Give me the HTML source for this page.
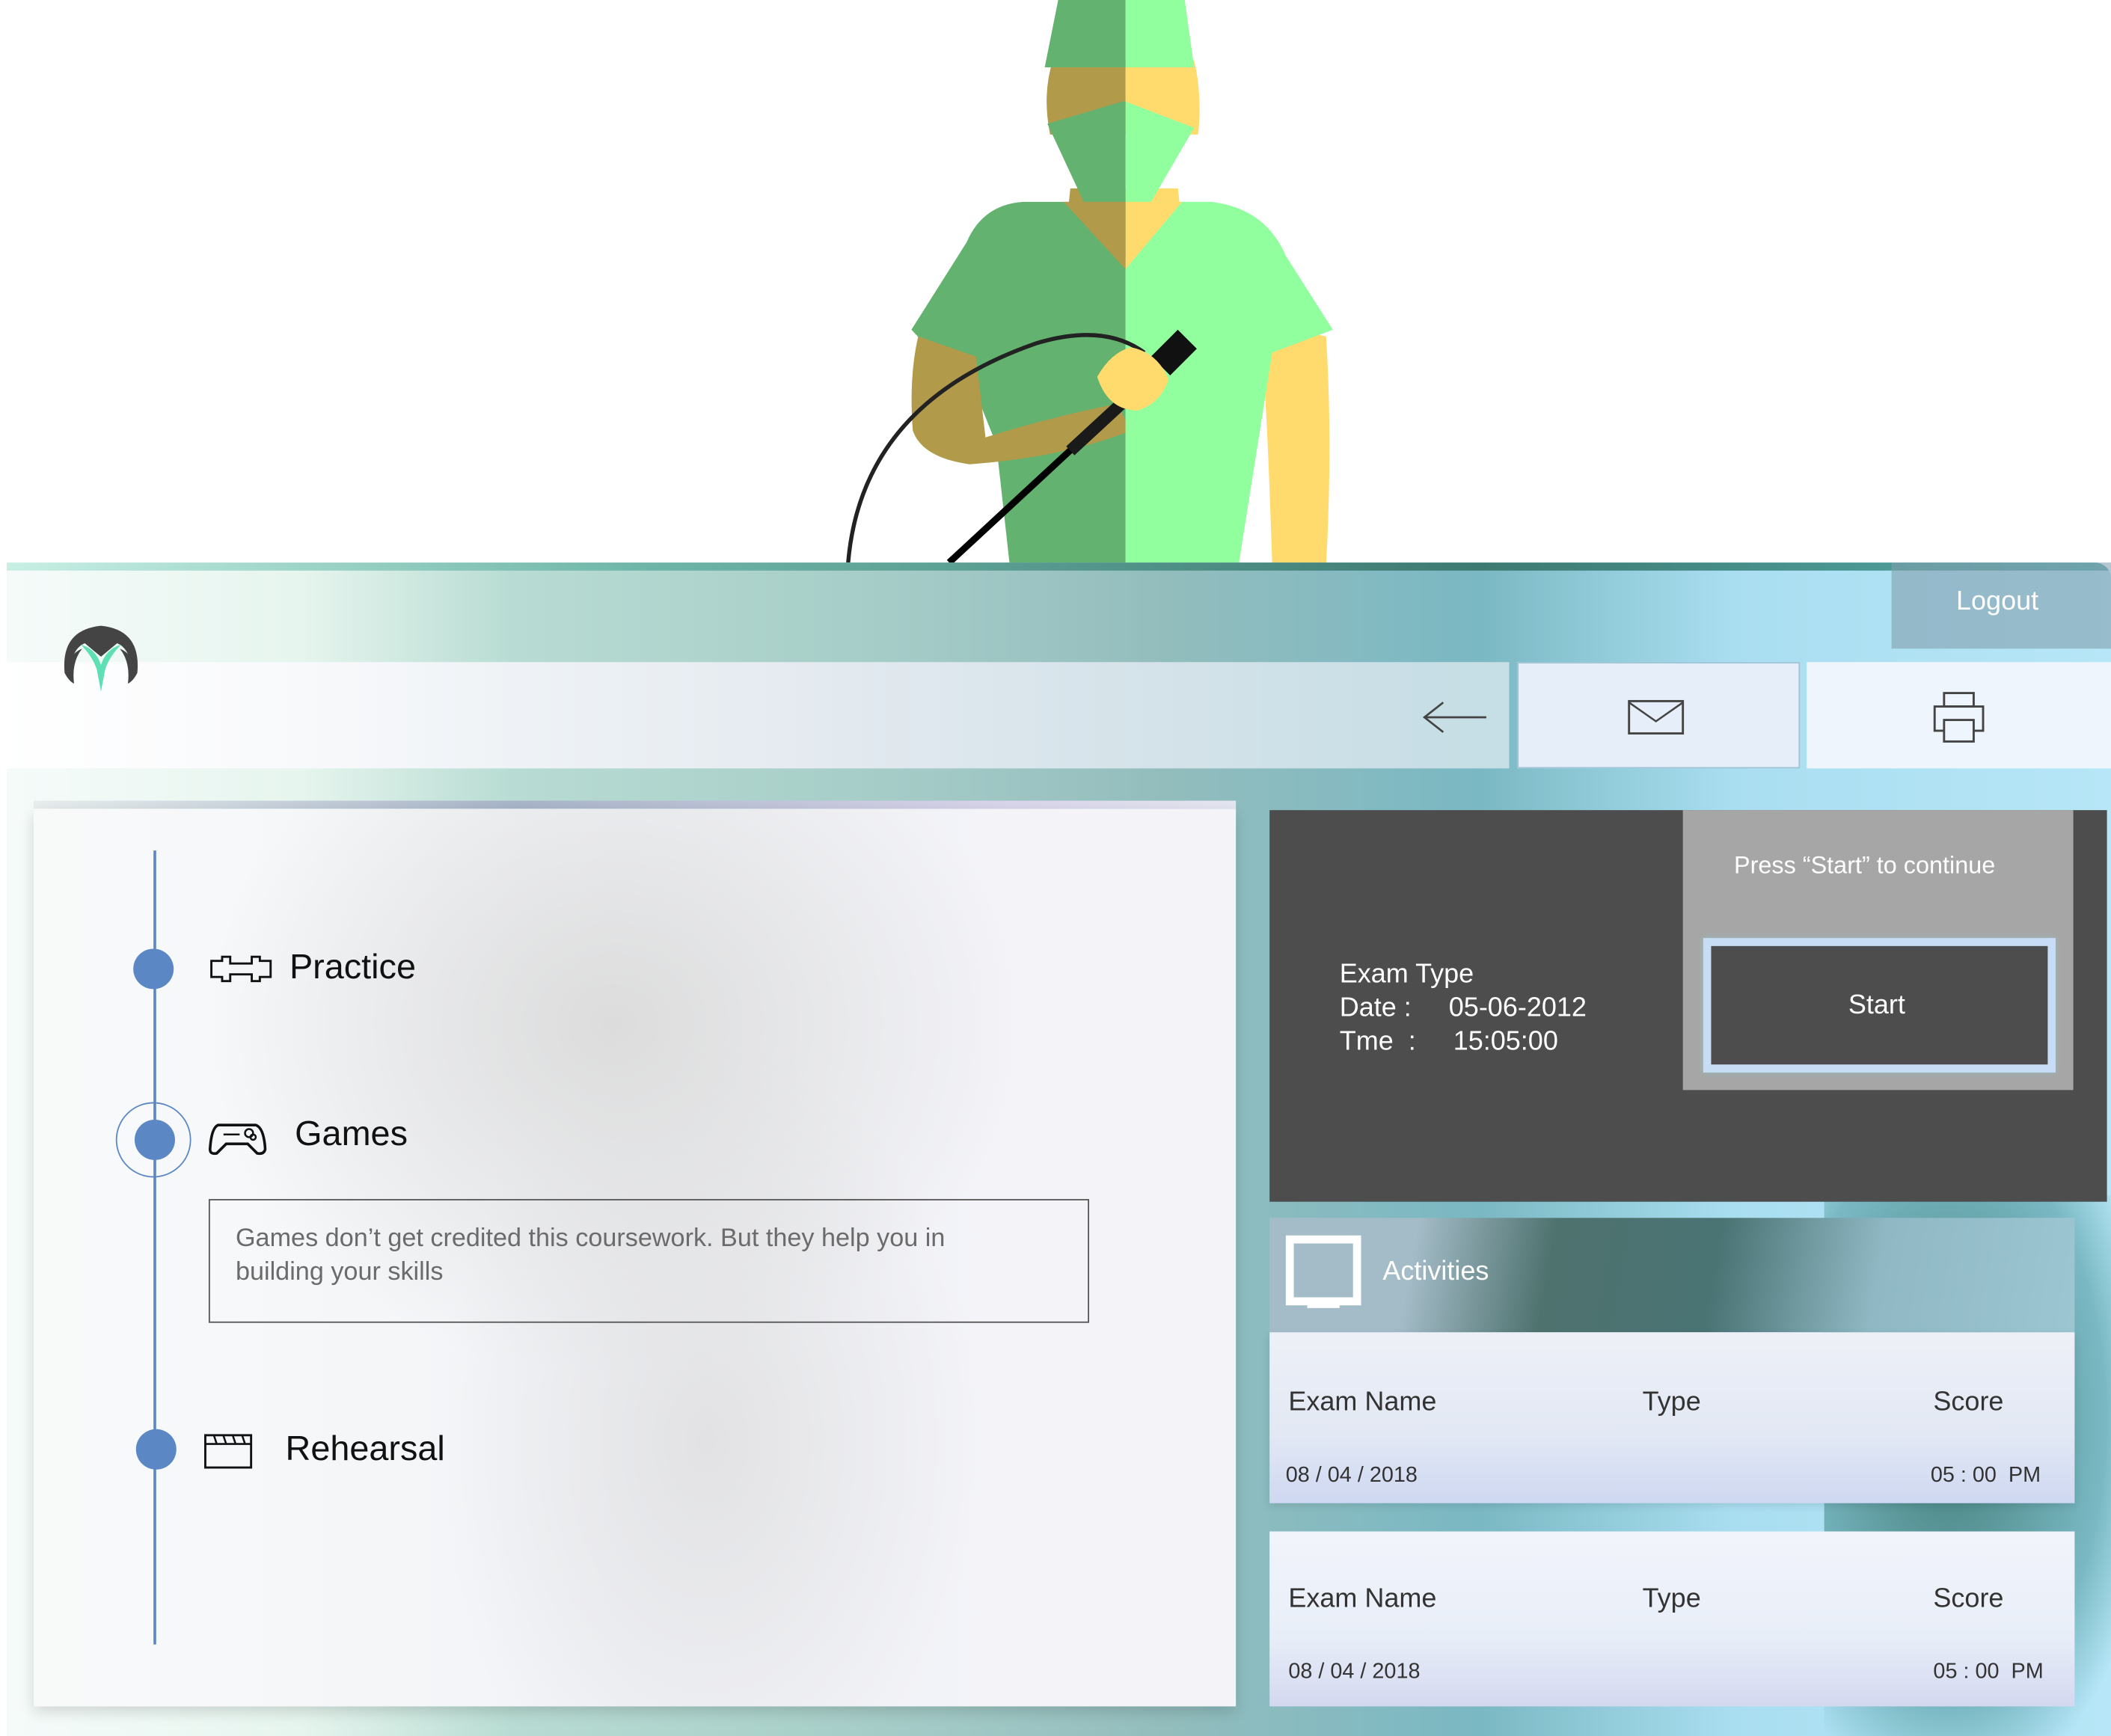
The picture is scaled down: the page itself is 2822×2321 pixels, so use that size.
<!DOCTYPE html>
<html><head><meta charset="utf-8"><style>
html,body{margin:0;padding:0;background:#fff;overflow:hidden}
body{width:2822px;height:2321px}
#s{position:absolute;left:0;top:0;width:1568px;height:1290px;transform:scale(1.79974,1.79922);transform-origin:0 0;font-family:"Liberation Sans",sans-serif}
.a{position:absolute}
.t{position:absolute;white-space:nowrap}
</style></head><body><div id="s">
<!-- figure -->
<svg class="a" style="left:0;top:0" width="1568" height="420" viewBox="0 0 1568 420">
<defs><clipPath id="L"><rect x="0" y="0" width="836" height="420"/></clipPath><clipPath id="R"><rect x="836" y="0" width="800" height="420"/></clipPath></defs>
<g clip-path="url(#R)">
<path d="M782 45 Q774 70 780 100 L890 100 Q893 70 887 45Z" fill="#ffdb6e"/>
<path d="M795 140 L790 190 L880 190 L875 140Z" fill="#ffdb6e"/>
<path d="M940 240 L985 250 Q990 330 985 420 L945 420 Q942 330 940 300Z" fill="#ffdb6e"/>
<path d="M776 50 L786 0 L880 0 L887 50Z" fill="#92ff9f"/>
<path d="M778 92 L835 75 L887 95 L855 150 L805 150Z" fill="#92ff9f"/>
<path d="M740 150 L900 150 Q940 155 955 190 L990 245 L945 262 L920 420 L750 420 L720 300 L677 245 L718 180 Q730 152 760 150Z" fill="#92ff9f"/>
<path d="M790 150 L836 200 L878 150Z" fill="#ffdb6e"/>
</g>
<g clip-path="url(#L)">
<path d="M782 45 Q774 70 780 100 L890 100 Q893 70 887 45Z" fill="#b19a4a"/>
<path d="M795 140 L790 190 L880 190 L875 140Z" fill="#b19a4a"/>
<path d="M776 50 L786 0 L880 0 L887 50Z" fill="#63b26f"/>
<path d="M778 92 L835 75 L887 95 L855 150 L805 150Z" fill="#63b26f"/>
<path d="M740 150 L900 150 Q940 155 955 190 L990 245 L945 262 L920 420 L750 420 L740 330 L728 300 L677 245 L718 180 Q730 152 760 150Z" fill="#63b26f"/>
<path d="M790 150 L836 200 L878 150Z" fill="#b19a4a"/>
<path d="M682 250 L725 265 L732 325 Q780 310 830 300 L840 320 Q790 340 720 345 Q685 340 678 320 Q675 280 682 250Z" fill="#b19a4a"/>
</g>
<path d="M630 418 Q640 300 770 255 Q820 240 850 262" stroke="#222" stroke-width="3" fill="none"/>
<path d="M705 418 L800 330" stroke="#000" stroke-width="5"/>
<path d="M795 335 L860 275" stroke="#1a1a1a" stroke-width="9"/>
<rect x="862" y="248" width="20" height="28" fill="#111" transform="rotate(45 872 262)"/>
<path d="M815 280 Q825 262 840 258 Q860 262 868 282 Q862 300 845 305 Q823 305 815 280Z" fill="#ffdb6e"/>
</svg>
<!-- panel background -->
<div class="a" style="left:5px;top:418px;width:1563px;height:872px;border-radius:0 12px 0 0;overflow:hidden;background:linear-gradient(90deg,#f6fbfa 0%,#e6f5ee 14%,#b8dcd3 24%,#a8cec9 40%,#93bdbd 55%,#7ab8c3 70%,#a9def0 82%,#b6e6f7 100%)">
<div class="a" style="left:0;top:0;width:100%;height:6px;background:linear-gradient(90deg,#c8efe4,#6fb6a8 30%,#3d7a72 70%,#5aa)"></div>
<div class="a" style="left:1350px;top:470px;width:230px;height:420px;background:radial-gradient(ellipse at 40% 40%,#447e7a,#7ab9c4 60%,transparent 80%)"></div>
</div>
<!-- logout -->
<div class="a" style="left:1405px;top:418px;width:163px;height:64px;background:rgba(130,160,175,.6)"></div>
<div class="t" style="left:1453px;top:436px;color:#fff;font-size:20px">Logout</div>
<!-- toolbar -->
<div class="a" style="left:5px;top:492px;width:1116px;height:79px;background:linear-gradient(90deg,rgba(255,255,255,.95),rgba(240,240,248,.85) 50%,rgba(205,225,232,.9))"></div>
<div class="a" style="left:1127px;top:492px;width:210px;height:79px;background:#e6eef9;border:1px solid #9cc4d6;box-sizing:border-box"></div>
<div class="a" style="left:1342px;top:492px;width:226px;height:79px;background:#eef5fc"></div>
<!-- logo -->
<svg class="a" style="left:45px;top:462px" width="60" height="55" viewBox="0 0 60 55">
<path d="M3 38 Q0 6 30 3 Q60 6 57 38 L53 38 Q52 20 42 16 L30 26 L18 16 Q8 20 7 38Z" fill="#444"/>
<path d="M3 38 Q6 44 10 46 Q8 30 16 20 Q6 24 3 38Z M57 38 Q54 44 50 46 Q52 30 44 20 Q54 24 57 38Z" fill="#444"/>
<path d="M15 17 Q26 20 30 32 Q34 20 45 17 Q36 26 33 36 L30 52 L27 36 Q24 26 15 17Z" fill="#5ee0b4"/>
</svg>
<svg class="a" style="left:1054px;top:518px" width="52" height="30"><path d="M50 15 H4 M18 4 L4 15 L18 26" stroke="#444" stroke-width="1.5" fill="none"/></svg>
<svg class="a" style="left:1208px;top:519px" width="44" height="28"><rect x="2" y="2" width="40" height="24" fill="none" stroke="#444" stroke-width="1.6"/><path d="M2 3 L22 17 L42 3" stroke="#444" stroke-width="1.4" fill="none"/></svg>
<svg class="a" style="left:1434px;top:513px" width="42" height="40"><rect x="10" y="2" width="22" height="10" fill="none" stroke="#444" stroke-width="1.6"/><rect x="3" y="12" width="36" height="18" fill="none" stroke="#444" stroke-width="1.6"/><rect x="10" y="22" width="22" height="16" fill="#eef5fc" stroke="#444" stroke-width="1.6"/></svg>
<!-- left card -->
<div class="a" style="left:25px;top:595px;width:893px;height:6px;background:linear-gradient(90deg,#e8eeee,#a8b4c8 40%,#d8d4ea 80%,#e4e6f0)"></div>
<div class="a" style="left:25px;top:601px;width:893px;height:667px;background:radial-gradient(ellipse 300px 260px at 430px 160px,#dcdcdc,rgba(240,242,246,0) 100%),radial-gradient(ellipse 200px 300px at 500px 470px,#e2e2e4,rgba(240,242,246,0)),linear-gradient(90deg,#f8fafa,#f1f3f7 50%,#f4f3f8);box-shadow:0 4px 10px rgba(0,0,0,.15)"></div>
<div class="a" style="left:114px;top:632px;width:2px;height:590px;background:#5b87c5"></div>
<div class="a" style="left:99px;top:705px;width:30px;height:30px;border-radius:50%;background:#5b87c5"></div>
<div class="a" style="left:86px;top:819px;width:56px;height:56px;border-radius:50%;border:1px solid #5b87c5;box-sizing:border-box"></div>
<div class="a" style="left:100px;top:832px;width:30px;height:30px;border-radius:50%;background:#5b87c5"></div>
<div class="a" style="left:101px;top:1062px;width:30px;height:30px;border-radius:50%;background:#5b87c5"></div>
<svg class="a" style="left:155px;top:708px" width="48" height="24"><path d="M2 6 H10 V3 H16 V8 H32 V3 H38 V6 H46 V18 H38 V21 H32 V16 H16 V21 H10 V18 H2Z" fill="none" stroke="#111" stroke-width="1.6"/></svg>
<svg class="a" style="left:154px;top:830px" width="44" height="30"><path d="M8 6 H36 Q42 8 43 24 Q42 28 37 27 L30 20 H14 L7 27 Q2 28 2 24 Q3 8 8 6Z" fill="none" stroke="#111" stroke-width="2"/><circle cx="31" cy="12" r="3" fill="none" stroke="#111" stroke-width="1.4"/><circle cx="34" cy="15" r="2" fill="none" stroke="#111" stroke-width="1.4"/><path d="M12 13 H24" stroke="#111" stroke-width="1.4"/></svg>
<svg class="a" style="left:151px;top:1065px" width="38" height="28"><rect x="1.5" y="1.5" width="34" height="24" fill="none" stroke="#111" stroke-width="1.6"/><path d="M1.5 8 H35.5 M8 2 L10 8 M15 2 L17 8 M22 2 L24 8 M29 2 L31 8" stroke="#111" stroke-width="1.4"/></svg>
<div class="t" style="left:215px;top:703px;font-size:26px;color:#111">Practice</div>
<div class="t" style="left:219px;top:827px;font-size:26px;color:#111">Games</div>
<div class="t" style="left:212px;top:1061px;font-size:26px;color:#111">Rehearsal</div>
<div class="a" style="left:155px;top:891px;width:654px;height:92px;border:1px solid #555;box-sizing:border-box"></div>
<div class="a" style="left:175px;top:908px;font-size:19px;line-height:25px;color:#6b6b6b;width:580px">Games don’t get credited this coursework. But they help you in building your skills</div>
<!-- dark panel -->
<div class="a" style="left:943px;top:602px;width:622px;height:291px;background:#4d4d4d"></div>
<div class="a" style="left:1250px;top:602px;width:290px;height:208px;background:#a6a6a6"></div>
<div class="t" style="left:1250px;width:270px;text-align:center;top:633px;color:#fff;font-size:18px">Press “Start” to continue</div>
<div class="a" style="left:1265px;top:697px;width:262px;height:100px;border:6px solid #c7ddf5;box-sizing:border-box;background:#4d4d4d;box-shadow:0 0 4px #9bb"></div>
<div class="t" style="left:1263px;width:262px;text-align:center;top:736px;color:#fff;font-size:20px">Start</div>
<div class="t" style="left:995px;top:712px;color:#fff;font-size:20px;line-height:25px">Exam Type<br>Date :&nbsp;&nbsp;&nbsp;&nbsp;&nbsp;05-06-2012<br>Tme&nbsp;&nbsp;:&nbsp;&nbsp;&nbsp;&nbsp;&nbsp;15:05:00</div>
<!-- activities -->
<div class="a" style="left:943px;top:905px;width:598px;height:85px;background:linear-gradient(100deg,#a4bcc8 0%,#a4bcc8 18%,#4e726e 35%,#4a7374 55%,#8fb8c4 75%,#9cc6d2)"></div>
<svg class="a" style="left:955px;top:918px" width="56" height="56"><rect x="3" y="3" width="50" height="46" fill="none" stroke="#fff" stroke-width="6"/><rect x="16" y="48" width="24" height="6" fill="#fff"/></svg>
<div class="t" style="left:1027px;top:934px;color:#fff;font-size:20px">Activities</div>
<div class="a" style="left:943px;top:990px;width:598px;height:127px;background:linear-gradient(180deg,#eef0f7,#e2e8f4 60%,#cfd8f2);box-shadow:0 2px 6px rgba(0,0,0,.1)"></div>
<div class="a" style="left:943px;top:1138px;width:598px;height:130px;background:linear-gradient(180deg,#f2f4fb,#e8eef8 60%,#d4d8f0)"></div>
<div class="t" style="left:957px;top:1031px;color:#333;font-size:20px">Exam Name</div>
<div class="t" style="left:1220px;top:1031px;color:#333;font-size:20px">Type</div>
<div class="t" style="left:1436px;top:1031px;color:#333;font-size:20px">Score</div>
<div class="t" style="left:955px;top:1088px;color:#333;font-size:16px">08 / 04 / 2018</div>
<div class="t" style="left:1434px;top:1088px;color:#333;font-size:16px">05 : 00&nbsp; PM</div>
<div class="t" style="left:957px;top:1177px;color:#333;font-size:20px">Exam Name</div>
<div class="t" style="left:1220px;top:1177px;color:#333;font-size:20px">Type</div>
<div class="t" style="left:1436px;top:1177px;color:#333;font-size:20px">Score</div>
<div class="t" style="left:957px;top:1234px;color:#333;font-size:16px">08 / 04 / 2018</div>
<div class="t" style="left:1436px;top:1234px;color:#333;font-size:16px">05 : 00&nbsp; PM</div>
</div></body></html>
